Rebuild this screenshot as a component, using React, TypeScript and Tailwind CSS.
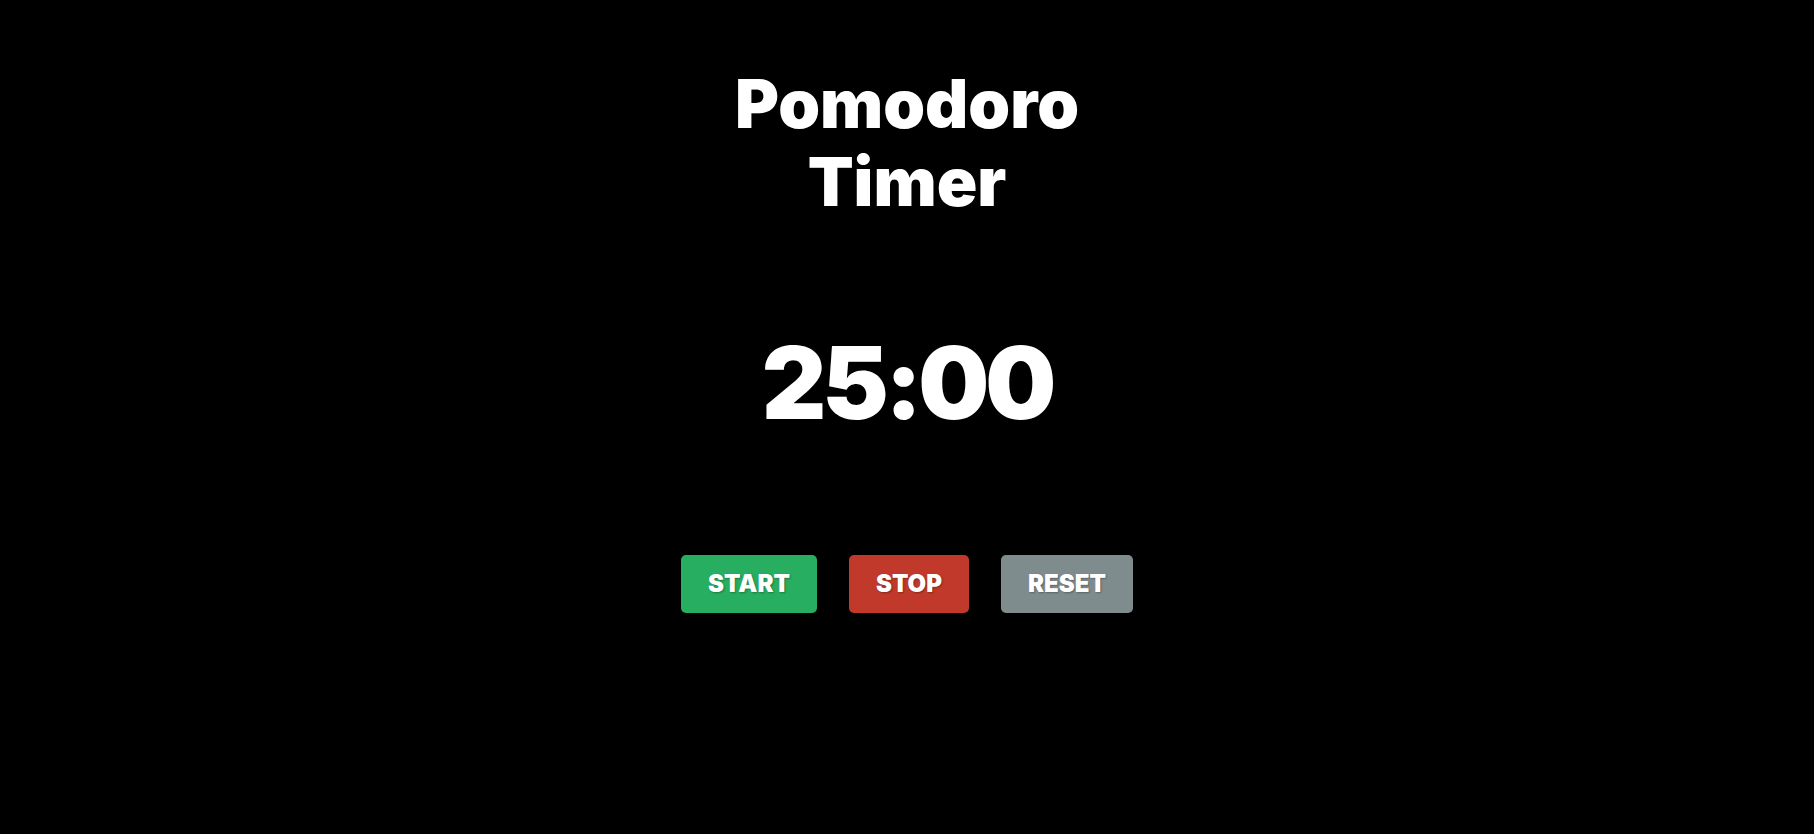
import React from "react";

export default function App() {
  return (
    <div className="min-h-screen w-full bg-black text-white flex flex-col items-center font-['Inter',sans-serif]">
      <h1 className="mt-[65px] text-center text-[67px] leading-[78px] font-black">
        Pomodoro
        <br />
        Timer
      </h1>
      <div className="mt-[102px] text-[100px] leading-[120px] font-black tracking-[-4px]">25:00</div>
      <div className="mt-[112px] flex gap-[32px]">
        <button className="h-[58px] px-[27px] rounded-[5px] bg-[#27ae60] text-[24px] font-black text-white [text-shadow:1px_1px_2px_rgba(0,0,0,0.3)]">
          START
        </button>
        <button className="h-[58px] px-[27px] rounded-[5px] bg-[#c0392b] text-[24px] font-black text-white [text-shadow:1px_1px_2px_rgba(0,0,0,0.3)]">
          STOP
        </button>
        <button className="h-[58px] px-[27px] rounded-[5px] bg-[#7f8c8d] text-[24px] font-black text-white [text-shadow:1px_1px_2px_rgba(0,0,0,0.3)]">
          RESET
        </button>
      </div>
    </div>
  );
}
